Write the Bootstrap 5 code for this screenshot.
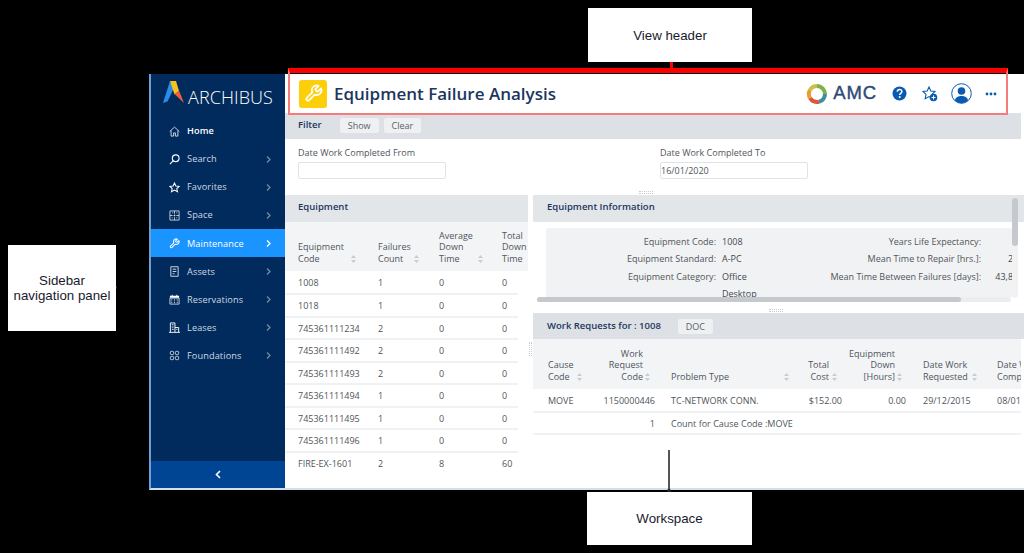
<!DOCTYPE html>
<html lang="en">
<head>
  <meta charset="UTF-8">
  <title>Equipment Failure Analysis</title>
  <meta name="viewport" content="width=device-width, initial-scale=1.0">
  <link href="https://cdn.jsdelivr.net/npm/bootstrap@5.3.0/dist/css/bootstrap.min.css" rel="stylesheet">
  <style>
    html, body { height: 553px; overflow: hidden; background: #000; }
    body { position: relative; font-family: "Open Sans", "Noto Sans", sans-serif; font-size: 9px; color: #50555b; }

    /* diagram callouts */
    .callout { position: absolute; background: #fff; color: #1a1a2e; font: 13.3px/15px "Liberation Sans", sans-serif; display: flex; align-items: center; justify-content: center; text-align: center; }
    .call-view { left: 588px; top: 8px; width: 164px; height: 54px; }
    .call-side { left: 8px; top: 245px; width: 108px; height: 86px; }
    .call-work { left: 587px; top: 492px; width: 165px; height: 53px; }
    .red-box { position: absolute; left: 288px; top: 68px; width: 720px; height: 47px; border: 2px solid #f67b7b; border-top: 5px solid #f00; pointer-events: none; }
    .red-line { position: absolute; left: 670px; top: 62px; width: 3px; height: 7px; background: #f00; }
    .lead-line { position: absolute; left: 668px; top: 450px; width: 2px; height: 42px; background: #555; }
    .lead-dot { position: absolute; left: 667px; top: 489px; width: 4px; height: 4px; border-radius: 50%; background: #222; }
    .side-dot { position: absolute; left: 114px; top: 286px; width: 3px; height: 3px; border-radius: 50%; background: #333; }

    /* window */
    .app-frame { padding: 74px 0 0 149px; }
    .app-win { height: 416px; border-left: 2px solid #6f9fd2; border-bottom: 2px solid #d5dfec; background: #fff; }
    .side-nav { width: 134px; flex: none; background: #002b5c; }
    .side-logo { height: 43px; padding: 7px 0 0 12px; gap: 4px; }
    .logo-word { font-size: 18px; font-weight: 300; color: #fff; line-height: 1; padding-top: 7px; letter-spacing: .1px; }
    .side-item { height: 28.1px; padding: 0 14px 0 18px; color: #cfd8e3; font-size: 9.2px; font-weight: 500; letter-spacing: .1px; text-decoration: none; }
    .side-item.on { background: #1a94ff; color: #fff; }
    .side-item svg.ic { width: 11px; height: 11px; margin-right: 7px; flex: none; }
    .side-item svg.cv { width: 5px; height: 7px; margin-left: auto; opacity: .45; }
    .side-item.on svg.cv { opacity: 1; }
    .side-foot { height: 27px; background: #004494; }

    /* workspace */
    .work-area { min-width: 0; position: relative; overflow: hidden; }
    .view-head { height: 39px; padding: 0 27px 0 14px; flex: none; }
    .app-badge { width: 28px; height: 28px; background: #fccf0a; border-radius: 3px; flex: none; }
    .view-title { font-size: 17px; font-weight: 600; color: #1c3660; margin: 0 0 0 7px; line-height: 1; }
    .amc-word { font: 18.5px/1 "Liberation Sans", sans-serif; -webkit-text-stroke: .4px #2f4a75; color: #2f4a75; letter-spacing: .9px; margin-left: 5px; }
    .gap-a { margin-left: 15px; }
    .gap-b { margin-left: 15px; }
    .gap-c { margin-left: 13px; }
    .gap-d { margin-left: 13px; }
    .filter-bar { height: 26px; width: 736px; background: #dde1e5; padding: 0 0 2px 13px; flex: none; }
    .pan-title { font-weight: 600; color: #1c3660; font-size: 9.5px; }
    .mini-btn { background: #eef0f2; color: #5c6167; border: 0; border-radius: 2px; font-size: 9px; height: 15px; padding: 0 8px; line-height: 15px; }
    .btn-show { margin-left: 18px; }
    .btn-clear { margin-left: 5px; }
    .btn-doc { margin-left: 17px; }
    .form-zone { height: 56px; padding: 8px 0 0 13px; flex: none; }
    .form-cell { width: 362px; }
    .form-cell label { display: block; line-height: 12px; margin-bottom: 3px; }
    .date-box { display: block; width: 148px; height: 17px; border: 1px solid #e1e4e7; border-radius: 2px; padding: 0; font-size: 9px; color: #50555b; background: #fff; }

    .split-zone { min-height: 0; }
    .left-pan { width: 243px; flex: none; overflow: hidden; }
    .right-pan { width: 491px; flex: none; margin-left: 5px; position: relative; }
    .pan-head { height: 27px; background: #e3e6e9; padding: 0 0 3px 13px; }
    .pan-head.info-head { padding-left: 14px; }
    .pan-head.deep { background: #dde1e5; height: 26px; padding: 0 0 0 14px; }

    .grid-tb { table-layout: fixed; margin: 0; border-collapse: collapse; font-size: 9px; }
    .grid-tb thead tr { background: #f3f4f6; }
    .grid-tb th { font-weight: 400; background: transparent; vertical-align: bottom; line-height: 11.4px; padding: 0 6px 7px 0; color: #50555b; white-space: nowrap; border: 0; position: relative; }
    .grid-tb td { height: 22.5px; padding: 1px 6px 0 0; color: #50555b; border: 0; border-bottom: 2px solid #f0f1f3; vertical-align: middle; white-space: nowrap; background: transparent; }
    .grid-tb .ind { padding-left: 13px; }
    .grid-tb .ind-b { padding-left: 15px; }
    .grid-tb td.blank { border-bottom-color: transparent; }
    .sort-mk { width: 5px; height: 8px; position: absolute; bottom: 8px; }
    .eq-tb { width: 243px; }
    .eq-tb th { height: 49px; }
    .eq-tb tbody tr:first-child td { height: 23px; }

    .info-zone { height: 91px; position: relative; flex: none; }
    .info-box { position: absolute; left: 13px; top: 6px; width: 466px; height: 69px; background: #f1f2f4; border-radius: 3px 3px 0 0; overflow: hidden; padding-top: 5px; }
    .info-row { height: 17.4px; line-height: 17.4px; white-space: nowrap; }
    .info-k1 { width: 176px; text-align: right; padding-right: 6px; flex: none; }
    .info-v1 { width: 64px; flex: none; color: #43484e; font-weight: 500; }
    .info-k2 { width: 195px; text-align: right; flex: none; }
    .info-v2 { width: 55px; text-align: right; flex: none; color: #43484e; font-weight: 500; }
    .bar-h { position: absolute; left: 4px; top: 75px; width: 474px; height: 5px; background: #ebedef; border-radius: 3px; }
    .bar-h i { display: block; width: 424px; height: 5px; background: #c5c9cd; border-radius: 3px; }
    .bar-v { position: absolute; left: 479px; top: 3px; width: 6px; height: 100px; background: #f1f2f4; border-radius: 3px; z-index: 2; }
    .bar-v i { display: block; width: 6px; height: 48px; background: #c5c9cd; border-radius: 3px; }
    .wr-tb { width: 488px; }
    .wr-tb th { height: 50px; }
    .grid-tb .wr-c2 { padding-right: 10px; }
    .grid-tb th.wr-c2 { padding-right: 22px; }
    .grid-tb .wr-c3 { padding-left: 6px; }
    .grid-tb .wr-c4 { padding-right: 2px; }
    .grid-tb th.wr-c4 { padding-right: 15px; }
    .grid-tb th.wr-c5 { padding-right: 17px; }
    .grid-tb .wr-c6 { padding-left: 11px; }
    .grid-tb .wr-c7 { padding-left: 6px; padding-right: 0; overflow: hidden; }
    .wr-scroll { overflow: hidden; }
    .grip { position: absolute; width: 14px; height: 3px; border-top: 1px dotted #c8ccd0; border-bottom: 1px dotted #c8ccd0; }
    .grip-a { left: 354px; top: 117px; }
    .grip-b { left: 484px; top: 235px; }
    .grip-c { left: 244px; top: 268px; width: 3px; height: 14px; border: 0; border-left: 1px dotted #c8ccd0; border-right: 1px dotted #c8ccd0; }
  </style>
</head>

<body>
  <svg width="0" height="0" class="position-absolute">
    <symbol id="sort" viewBox="0 0 5 8"><path d="M2.500 0 5 3H0zM2.500 8 0 5h5z" fill="#c9ccd0"/></symbol>
    <symbol id="chev" viewBox="0 0 5 7"><path d="M1 .5 4 3.500 1 6.500" fill="none" stroke="#fff" stroke-width="1.300"/></symbol>
    <symbol id="wrench" viewBox="0 0 24 24"><path d="M14.700 6.300a1 1 0 0 0 0 1.400l1.600 1.600a1 1 0 0 0 1.400 0l3.770-3.770a6 6 0 0 1-7.940 7.940l-6.910 6.910a2.120 2.120 0 0 1-3-3l6.910-6.910a6 6 0 0 1 7.940-7.940l-3.760 3.760z" fill="none" stroke="currentColor" stroke-width="2.200" stroke-linejoin="round"/></symbol>
  </svg>

  <div class="app-frame">
    <div class="app-win d-flex">
      <nav class="side-nav d-flex flex-column">
        <div class="side-logo d-flex">
          <svg width="21" height="22" viewBox="0 0 21 22">
            <path d="M7 0 0 22l4.500-1.500L10.500 8z" fill="#2a8be8"/>
            <path d="M7 0h6l3 10-4.500 3.500z" fill="#f6c21c"/>
            <path d="M11.500 13 16 9.500 21 22z" fill="#e8603c"/>
          </svg>
          <span class="logo-word">ARCHIBUS</span>
        </div>
        <a class="side-item d-flex align-items-center" href="#"><svg class="ic" viewBox="0 0 12 12" fill="none" stroke="#d7dfe9"><path d="M.8 6 6 1.200 11.200 6M2.300 5v6h2.700V7.500h2V11h2.700V5"/></svg><span class="text-white fw-semibold">Home</span></a>
        <a class="side-item d-flex align-items-center" href="#"><svg class="ic" viewBox="0 0 12 12" fill="none" stroke="#fff" stroke-width="1.200"><circle cx="7.300" cy="4.700" r="3.700"/><path d="M4.500 7.500 1 11"/></svg>Search<svg class="cv"><use href="#chev"/></svg></a>
        <a class="side-item d-flex align-items-center" href="#"><svg class="ic" viewBox="0 0 12 12" fill="none" stroke="#fff" stroke-width="1.100"><path d="m6 1 1.500 3.300 3.700.4-2.700 2.400.8 3.600L6 8.900l-3.300 1.800.8-3.600L.8 4.700l3.700-.4z"/></svg>Favorites<svg class="cv"><use href="#chev"/></svg></a>
        <a class="side-item d-flex align-items-center" href="#"><svg class="ic" viewBox="0 0 12 12" fill="none" stroke="#d7dfe9" stroke-width=".9"><path d="M1 1h10v10H1zM1 6h3M6 1v3M8 6h3M6 8v3M5 6h2M6 5v2M3.500 3h1M8 3h1M3 8.500h1M8 8.500h1"/></svg>Space<svg class="cv"><use href="#chev"/></svg></a>
        <a class="side-item on d-flex align-items-center" href="#"><svg class="ic"><use href="#wrench"/></svg>Maintenance<svg class="cv"><use href="#chev"/></svg></a>
        <a class="side-item d-flex align-items-center" href="#"><svg class="ic" viewBox="0 0 12 12" fill="none" stroke="#d7dfe9"><path d="M2 .8h8v10.400H2zM4 3.500h4M4 6h4M4 8.500h2"/></svg>Assets<svg class="cv"><use href="#chev"/></svg></a>
        <a class="side-item d-flex align-items-center" href="#"><svg class="ic" viewBox="0 0 12 12"><path d="M1 2h2V.8h1V2h4V.8h1V2h2v2H1z" fill="#fff"/><path d="M1 4.500h10V11H1z" fill="none" stroke="#fff" stroke-width=".8"/><path d="M2.500 6h1v1h-1zM5.500 6h1v1h-1zM8.500 6h1v1h-1zM2.500 8.500h1v1h-1zM5.500 8.500h1v1h-1zM8.500 8.500h1v1h-1z" fill="#fff"/></svg>Reservations<svg class="cv"><use href="#chev"/></svg></a>
        <a class="side-item d-flex align-items-center" href="#"><svg class="ic" viewBox="0 0 12 12" fill="none" stroke="#fff"><path d="M1.500 11V1h5v10M6.500 6h4v5M0 11.300h12M3 3h2M3 5.500h2M3 8h2M8 8h1.200"/></svg>Leases<svg class="cv"><use href="#chev"/></svg></a>
        <a class="side-item d-flex align-items-center" href="#"><svg class="ic" viewBox="0 0 12 12" fill="none" stroke="#d7dfe9"><rect x="1.500" y="1.500" width="3.500" height="3.500" rx="1"/><rect x="7" y="1.500" width="3.500" height="3.500" rx="1"/><rect x="1.500" y="7" width="3.500" height="3.500" rx="1"/><rect x="7" y="7" width="3.500" height="3.500" rx="1"/></svg>Foundations<svg class="cv"><use href="#chev"/></svg></a>
        <div class="side-foot mt-auto d-flex align-items-center justify-content-center">
          <svg width="6" height="9" viewBox="0 0 6 9"><path d="M5 1 1.500 4.500 5 8" fill="none" stroke="#fff" stroke-width="1.600"/></svg>
        </div>
      </nav>

      <main class="work-area flex-grow-1 d-flex flex-column">
        <header class="view-head d-flex align-items-center">
          <div class="app-badge d-flex align-items-center justify-content-center text-white">
            <svg width="19" height="19"><use href="#wrench"/></svg>
          </div>
          <h1 class="view-title">Equipment Failure Analysis</h1>
          <div class="ms-auto d-flex align-items-center">
            <svg width="22" height="22" viewBox="0 0 22 22">
              <g fill="none" stroke-width="4">
                <path d="M11 3a8 8 0 0 1 8 8" stroke="#7fb04a"/>
                <path d="M19 11a8 8 0 0 1-6 7.750" stroke="#3d8f9e"/>
                <path d="M13 18.750A8 8 0 0 1 4 15" stroke="#d9583a"/>
                <path d="M4 15a8 8 0 0 1 0-8" stroke="#e8a02c"/>
                <path d="M4 7a8 8 0 0 1 7-4" stroke="#c9c24a"/>
              </g>
            </svg>
            <span class="amc-word">AMC</span>
            <svg class="gap-a" width="15" height="15" viewBox="0 0 15 15"><circle cx="7.500" cy="7.500" r="7" fill="#0a5bb0"/><path d="M5.300 5.800c0-3 4.600-3 4.600-.2 0 1.700-2.200 1.700-2.200 3.300" fill="none" stroke="#fff" stroke-width="1.500"/><circle cx="7.700" cy="11" r="1" fill="#fff"/></svg>
            <svg class="gap-b" width="16" height="16" viewBox="0 0 16 16"><path d="m7 1 1.800 4 4.200.5-3 2.900.8 4.300L7 10.600l-3.800 2.100.8-4.300-3-2.900L5.200 5z" fill="none" stroke="#0a5bb0" stroke-width="1.100"/><circle cx="11.500" cy="11.500" r="3.800" fill="#0a5bb0"/><path d="M11.500 9.500v4M9.500 11.500h4" stroke="#fff"/></svg>
            <svg class="gap-c" width="21" height="21" viewBox="0 0 21 21"><circle cx="10.500" cy="10.500" r="9.800" fill="#fff" stroke="#0a5bb0" stroke-width="1"/><circle cx="10.500" cy="8" r="3.800" fill="#0a5bb0"/><path d="M3.800 17.500c1-3.500 3.500-4.500 6.700-4.500s5.700 1 6.700 4.500a9.800 9.800 0 0 1-13.400 0z" fill="#0a5bb0"/></svg>
            <svg class="gap-d" width="12" height="4" viewBox="0 0 12 4" fill="#0a5bb0"><circle cx="2" cy="2" r="1.400"/><circle cx="6" cy="2" r="1.400"/><circle cx="10" cy="2" r="1.400"/></svg>
          </div>
        </header>

        <div class="filter-bar d-flex align-items-center">
          <span class="pan-title">Filter</span>
          <button class="mini-btn btn-show">Show</button>
          <button class="mini-btn btn-clear">Clear</button>
        </div>

        <form class="form-zone d-flex">
          <div class="form-cell">
            <label for="dFrom">Date Work Completed From</label>
            <input id="dFrom" class="date-box" type="text">
          </div>
          <div class="form-cell">
            <label for="dTo">Date Work Completed To</label>
            <input id="dTo" class="date-box" type="text" value="16/01/2020">
          </div>
        </form>

        <div class="split-zone d-flex flex-grow-1">
          <section class="left-pan">
            <div class="pan-head d-flex align-items-center"><span class="pan-title">Equipment</span></div>
            <table class="table grid-tb eq-tb">
              <colgroup><col style="width:93px"><col style="width:61px"><col style="width:63px"><col style="width:16px"><col style="width:10px"></colgroup>
              <thead>
                <tr>
                  <th class="ind">Equipment<br>Code<svg class="sort-mk" style="left:66px"><use href="#sort"/></svg></th>
                  <th>Failures<br>Count<svg class="sort-mk" style="left:36px"><use href="#sort"/></svg></th>
                  <th>Average<br>Down<br>Time<svg class="sort-mk" style="left:39px"><use href="#sort"/></svg></th>
                  <th>Total<br>Down<br>Time</th>
                  <th></th>
                </tr>
              </thead>
              <tbody id="eqRows"></tbody>
            </table>
          </section>

          <section class="right-pan d-flex flex-column">
            <div class="pan-head info-head d-flex align-items-center"><span class="pan-title">Equipment Information</span></div>
            <div class="info-zone">
              <div class="info-box">
                <div class="info-row d-flex"><span class="info-k1">Equipment Code:</span><span class="info-v1">1008</span><span class="info-k2">Years Life Expectancy:</span></div>
                <div class="info-row d-flex"><span class="info-k1">Equipment Standard:</span><span class="info-v1">A-PC</span><span class="info-k2">Mean Time to Repair [hrs.]:</span><span class="info-v2">243.00</span></div>
                <div class="info-row d-flex"><span class="info-k1">Equipment Category:</span><span class="info-v1">Office</span><span class="info-k2">Mean Time Between Failures [days]:</span><span class="info-v2">43,800.00</span></div>
                <div class="info-row d-flex"><span class="info-k1"></span><span class="info-v1">Desktop</span></div>
              </div>
              <div class="bar-h"><i></i></div>
            </div>
            <div class="bar-v"><i></i></div>
            <div class="pan-head deep d-flex align-items-center">
              <span class="pan-title">Work Requests for : 1008</span>
              <button class="mini-btn btn-doc">DOC</button>
            </div>
            <div class="wr-scroll">
              <table class="table grid-tb wr-tb">
                <colgroup><col style="width:57px"><col style="width:75px"><col style="width:130px"><col style="width:49px"><col style="width:68px"><col style="width:79px"><col style="width:30px"></colgroup>
                <thead>
                  <tr>
                    <th class="ind-b">Cause<br>Code<svg class="sort-mk" style="left:44px"><use href="#sort"/></svg></th>
                    <th class="text-end wr-c2">Work<br>Request<br>Code<svg class="sort-mk" style="right:15px"><use href="#sort"/></svg></th>
                    <th class="wr-c3">Problem Type<svg class="sort-mk" style="left:119px"><use href="#sort"/></svg></th>
                    <th class="text-end wr-c4">Total<br>Cost<svg class="sort-mk" style="right:7px"><use href="#sort"/></svg></th>
                    <th class="text-end wr-c5">Equipment<br>Down<br>[Hours]<svg class="sort-mk" style="right:10px"><use href="#sort"/></svg></th>
                    <th class="wr-c6">Date Work<br>Requested<svg class="sort-mk" style="left:60px"><use href="#sort"/></svg></th>
                    <th class="wr-c7">Date Work<br>Completed</th>
                  </tr>
                </thead>
                <tbody>
                  <tr><td class="ind-b">MOVE</td><td class="text-end wr-c2">1150000446</td><td class="wr-c3">TC-NETWORK CONN.</td><td class="text-end wr-c4">$152.00</td><td class="text-end">0.00</td><td class="wr-c6">29/12/2015</td><td class="wr-c7">08/01/2016</td></tr>
                  <tr><td></td><td class="text-end wr-c2">1</td><td colspan="5" class="wr-c3">Count for Cause Code :MOVE</td></tr>
                </tbody>
              </table>
            </div>
          </section>
        </div>

        <span class="grip grip-a"></span>
        <span class="grip grip-b"></span>
        <span class="grip grip-c"></span>
      </main>
    </div>
  </div>

  <div class="red-box"></div>
  <div class="red-line"></div>
  <div class="lead-line"></div>
  <div class="lead-dot"></div>
  <div class="side-dot"></div>
  <div class="callout call-view">View header</div>
  <div class="callout call-side">Sidebar<br>navigation panel</div>
  <div class="callout call-work">Workspace</div>

  <script src="https://cdn.jsdelivr.net/npm/bootstrap@5.3.0/dist/js/bootstrap.bundle.min.js"></script>
  <script>
    const equipment = [
      ["1008", 1, 0, 0], ["1018", 1, 0, 0], ["745361111234", 2, 0, 0],
      ["745361111492", 2, 0, 0], ["745361111493", 2, 0, 0], ["745361111494", 1, 0, 0],
      ["745361111495", 1, 0, 0], ["745361111496", 1, 0, 0], ["FIRE-EX-1601", 2, 8, 60]
    ];
    document.getElementById("eqRows").innerHTML = equipment.map((r, i) =>
      `<tr><td class="ind${i == 8 ? " blank" : ""}">${r[0]}</td><td class="${i == 8 ? "blank" : ""}">${r[1]}</td><td class="${i == 8 ? "blank" : ""}">${r[2]}</td><td class="${i == 8 ? "blank" : ""}">${r[3]}</td><td class="blank"></td></tr>`
    ).join("");
  </script>
</body>
</html>
